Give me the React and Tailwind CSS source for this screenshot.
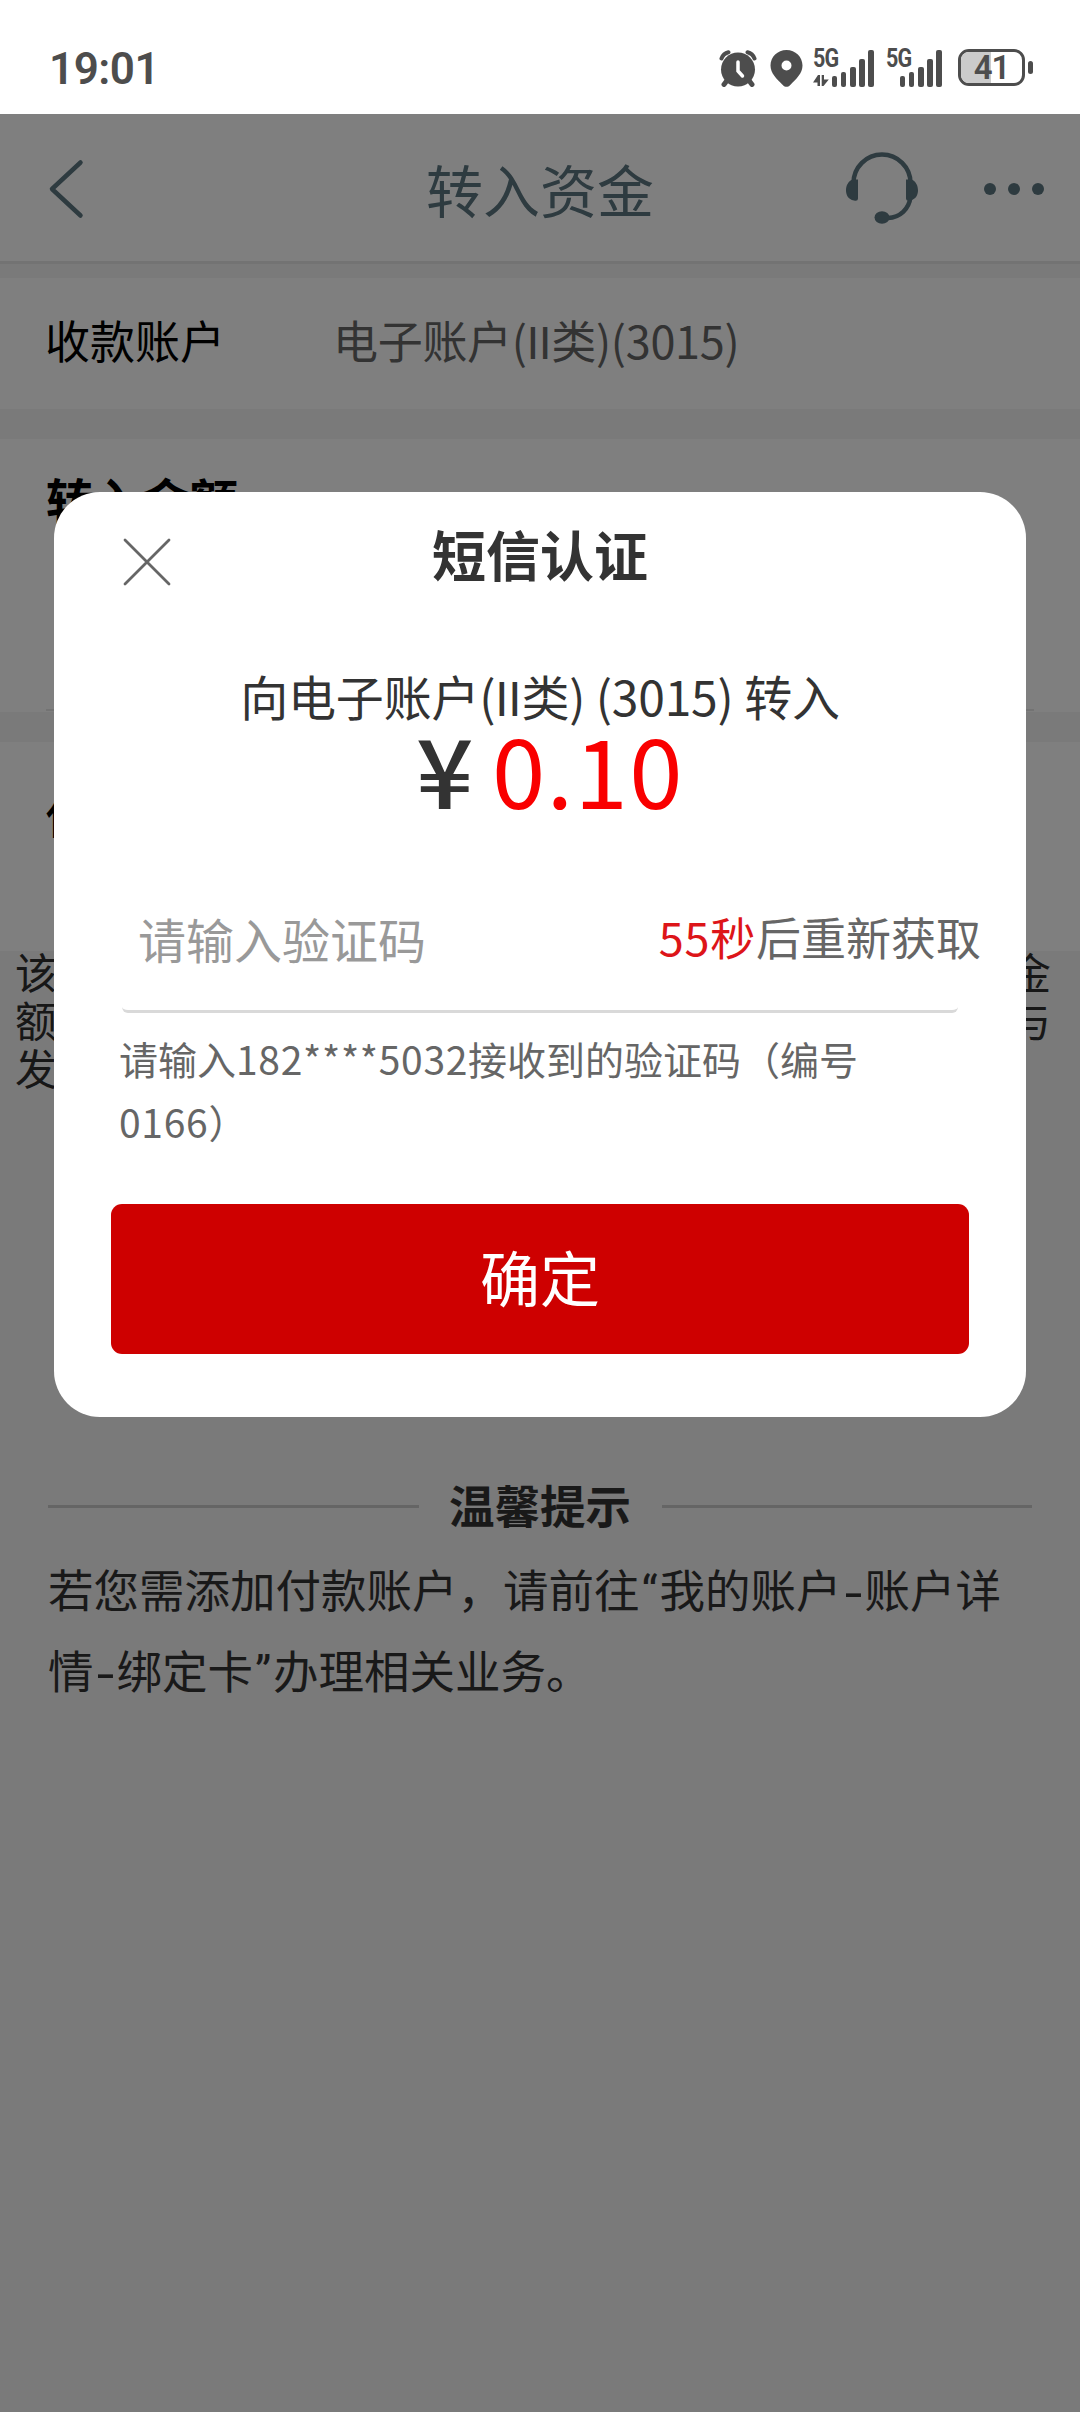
const bars = ["h-[11px]", "h-[15px]", "h-[20px]", "h-[28px]", "h-[37px]"];

function Signal({ data }) {
  return (
    <div className={data ? "relative w-[61px] h-[38px]" : "relative w-[56px] h-[38px]"}>
      <span className="absolute left-0 top-[-2px] text-[25px] leading-[24px] font-bold tracking-[-1px] origin-left scale-x-[.86] font-['Roboto',sans-serif]">5G</span>
      {data && (
        <svg className="absolute left-0 top-[26px]" width="16" height="11" viewBox="0 0 16 11" fill="currentColor">
          <path d="M0 7.500 5 0h2v11H4.500V7.500zM15.800 4.500 10.500 11H8.700V0h2.300v4.500z" />
        </svg>
      )}
      <div className="absolute right-0 bottom-0 flex items-end gap-[3.6px]">
        {bars.map((h) => (
          <i key={h} className={"w-[5.6px] rounded-[2px] bg-[#4d4d4d] " + h} />
        ))}
      </div>
    </div>
  );
}

function StatusBar() {
  return (
    <div className="h-[114px] bg-white text-[#4d4d4d] flex justify-between">
      <div className="pl-[49px] pt-[42px] text-[44px] leading-[54px] font-semibold tracking-[-0.5px] font-['Roboto',sans-serif]">19:01</div>
      <div className="flex pt-[49px] pr-[47px]">
        <svg width="38" height="38" viewBox="0 0 38 38" className="mr-[13px]">
          <g fill="none" stroke="#4d4d4d" strokeWidth="4" strokeLinecap="round">
            <path d="M2.500 9.500a10 10 0 0 1 7-6.200" />
            <path d="M35.500 9.500a10 10 0 0 0-7-6.200" />
            <path d="M8 31.500 5 35.500M30 31.500l3 4" strokeWidth="5" />
          </g>
          <circle cx="19" cy="20.500" r="17" fill="#4d4d4d" />
          <path d="M19 13v9l4.500 5" fill="none" stroke="#fff" strokeWidth="3.500" strokeLinecap="round" />
        </svg>
        <svg width="33" height="38" viewBox="0 0 33 38" className="mr-[10px]">
          <path fill="#4d4d4d" fillRule="evenodd" d="M16.500 1C7.500 1 .5 8 .5 16.500c0 8 6 13 12.500 19.800 2 2 5 2 7 0C26.500 29.500 32.500 24.500 32.500 16.500 32.500 8 25.500 1 16.500 1zm0 10.500a5 5 0 1 1 0 10 5 5 0 0 1 0-10z" />
        </svg>
        <Signal data />
        <div className="w-[12px]" />
        <Signal />
        <div className="ml-[16px] relative w-[67px] h-[37px] rounded-[11px] border-[3.500px] border-[#4d4d4d] overflow-hidden">
          <div className="absolute left-0 top-0 h-full w-[30px] bg-[#cbcbcb]" />
          <div className="absolute inset-0 text-center text-[33px] leading-[31px] font-semibold tracking-[-1px] font-['Roboto',sans-serif]">41</div>
        </div>
        <div className="ml-[3px] mt-[12px] w-[5px] h-[13px] rounded-[3px] bg-[#4d4d4d]" />
      </div>
    </div>
  );
}

function NavBar() {
  return (
    <div className="h-[150px] shrink-0 bg-white border-b-[3px] border-[#e6e6e6] flex items-center text-[#5c7680]">
      <svg width="60" height="60" viewBox="0 0 60 60" className="ml-[40px] mb-[-2px]" fill="none" stroke="currentColor" strokeWidth="4.500" strokeLinecap="round" strokeLinejoin="round">
        <path d="M40.500 3.500 12 30l28.500 26.500" />
      </svg>
      <div className="ml-[326px] w-[228px] text-[57px] leading-[60px]">转入资金</div>
      <svg width="80" height="80" viewBox="0 0 80 80" className="ml-[188px] mt-[3px]" fill="currentColor">
        <path d="M11.500 34a28.500 28.500 0 0 1 57 0v14C67 60 58 68.500 46 69" fill="none" stroke="currentColor" strokeWidth="4.500" />
        <path d="M10.500 30.500h5.500v19q0 3-4 2C6 50.500 4 45.500 4 41.500c0-5 2-9 6.500-11z" />
        <path d="M69.500 30.500H64v19q0 3 4 2c6-1 8-6 8-10 0-5-2-9-6.500-11z" />
        <ellipse cx="40" cy="68.500" rx="7.500" ry="6.200" />
      </svg>
      <div className="ml-[62px] mt-[2px] flex gap-[12px]">
        <i className="size-[12px] rounded-full bg-[#5c7680]" />
        <i className="size-[12px] rounded-full bg-[#5c7680]" />
        <i className="size-[12px] rounded-full bg-[#5c7680]" />
      </div>
    </div>
  );
}

function Two() {
  return <span className="leading-none tracking-normal font-['Roboto',sans-serif]">II</span>;
}

function Page() {
  return (
    <div className="flex flex-col">
      <NavBar />
      <div className="mt-[14px] h-[131px] bg-white pl-[45px] flex text-[45px] leading-[123px]">
        <div className="w-[288px] text-black">收款账户</div>
        <div className="text-[#666] tracking-[-0.300px]">电子账户(<Two />类)(3015)</div>
      </div>
      <div className="mt-[30px] h-[273px] bg-white pl-[46px] pt-[34px] flex flex-col justify-between">
        <div className="text-[48px] leading-[50px] font-bold text-black">转入金额</div>
        <div className="h-[2px] mb-px bg-[#e6e6e6] mr-[46px]" />
      </div>
      <div className="mt-[30px] h-[209px] bg-white pl-[45px] pt-[48px] text-[45px] leading-[50px] font-medium text-black">付款账户</div>
      <div className="pl-[15px] text-[42px] leading-[48px] text-[#2e2e2e] pr-[29px] -mt-[4px]">
        <div className="flex justify-between"><span>该</span><span>金</span></div>
        <div className="flex justify-between"><span>额</span><span>与</span></div>
        <div>发</div>
      </div>
      <div className="mt-[388px] px-[48px] flex items-center">
        <div className="h-[3px] flex-1 mt-[5px] bg-[#cacaca]" />
        <div className="w-[243px] text-center text-[45.500px] leading-[50px] font-bold text-[#333]">温馨提示</div>
        <div className="h-[3px] flex-1 mt-[5px] bg-[#cacaca]" />
      </div>
      <div className="mt-[19px] pl-[48px] text-[45.500px] leading-[81px] text-[#333] whitespace-nowrap">
        <div className="h-[81px]">若您需添加付款账户，请前往<Narrow>“</Narrow>我的账户<Dash />账户详</div>
        <div className="h-[81px]">情<Dash />绑定卡<Narrow>”</Narrow>办理相关业务。</div>
      </div>
    </div>
  );
}

function Narrow({ children }) {
  return <span className="inline-block w-[20px] leading-none text-center font-['Roboto',sans-serif]">{children}</span>;
}

function Dash() {
  return <span className="inline-block w-[23px] leading-none text-center scale-x-135 font-['Liberation_Sans',sans-serif]">-</span>;
}

function Dialog() {
  return (
    <div className="w-[972px] h-[925px] bg-white rounded-[46px] flex flex-col text-[#333]">
      <div className="relative h-[124px] text-center text-[54px] leading-[124px] font-bold">
        <svg className="absolute left-[69px] top-[46px]" width="48" height="48" viewBox="0 0 48 48" fill="none" stroke="#666" strokeWidth="2.800" strokeLinecap="round">
          <path d="M2 2l44 44M46 2 2 46" />
        </svg>
        短信认证
      </div>
      <div className="mt-[55px] h-[48px] text-center text-[48px] leading-[48px] tracking-[-0.200px] whitespace-nowrap">向电子账户(<Two />类) (3015) 转入</div>
      <div className="h-[98px] leading-[98px] text-[96px] flex pl-[362px]">
        <span className="w-[76px] origin-left scale-x-105 font-medium">¥</span>
        <span className="text-[#f90000] tracking-[1.300px]">0.10</span>
      </div>
      <div className="mt-[45px] ml-[68px] w-[836px] h-[151px] border-b-[3px] border-[#d9d9d9] rounded-b-[6px] flex justify-between whitespace-nowrap">
        <div className="pl-[16px] text-[48px] leading-[152px] text-[#999]">请输入验证码</div>
        <div className="-mr-[23px] text-[45px] leading-[149px] text-[#666]"><span className="text-[#dd1519] tracking-[0.800px]">55秒</span>后重新获取</div>
      </div>
      <div className="mt-[14px] ml-[65px] h-[125px] text-[39px] leading-[62.500px] text-[#666] whitespace-nowrap">
        <div>请输入<span className="tracking-[0.700px]">182****5032</span>接收到的验证码（编号</div>
        <div><span className="tracking-[0.700px]">0166</span>）</div>
      </div>
      <button className="mt-[52px] ml-[57px] w-[858px] h-[150px] rounded-[11px] bg-[#ce0000] text-white text-[60px] leading-[60px] pb-[7px]">确定</button>
    </div>
  );
}

export default function App() {
  return (
    <div className="w-[1080px] h-[2412px] overflow-hidden flex flex-col font-['Noto_Sans_CJK_SC',sans-serif]">
      <StatusBar />
      <div className="relative flex-1 bg-[#f4f4f4]">
        <Page />
        <div className="absolute inset-0 bg-black/50 flex justify-center items-start pt-[378px]">
          <Dialog />
        </div>
      </div>
    </div>
  );
}
